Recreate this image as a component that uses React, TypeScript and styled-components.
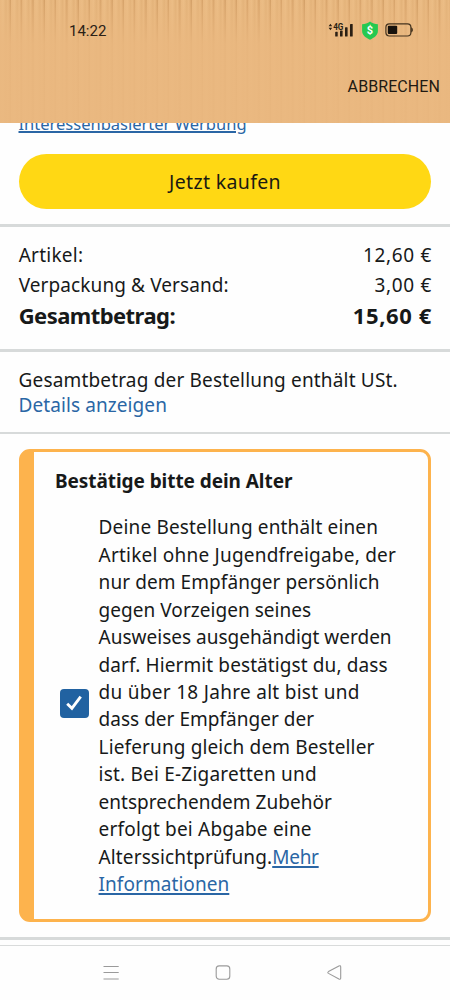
import React from "react";
import styled, { createGlobalStyle } from "styled-components";

const Global = createGlobalStyle`
  * { box-sizing: border-box; }
  body { margin: 0; background: #fefefe; }
`;

const Screen = styled.main`
  width: 450px;
  height: 1000px;
  overflow: hidden;
  display: flex;
  flex-direction: column;
  background: #fefefe;
  color: #171919;
  font-family: "Noto Sans", "Open Sans", sans-serif;
  font-size: 19px;
  white-space: nowrap;
`;

const Header = styled.header`
  flex: none;
  height: 122.7px;
  display: flex;
  flex-direction: column;
  font-family: Roboto, sans-serif;
  color: #2b2116;
  background:
    linear-gradient(to bottom, rgba(234, 184, 128, 0.3) 0, rgba(234, 184, 128, 0.5) 14px, rgba(234, 184, 128, 0.9) 44px, rgba(234, 184, 128, 0.94) 100%),
    repeating-linear-gradient(to right, #e8b880 0, #ecbf88 3px, #e0b077 6px, #eabb83 8px, #d5a168 10px, #cb985f 10.7px, #e8b880 11.3px);
`;

const StatusBar = styled.div`
  height: 61px;
  padding: 0 36px 0 69px;
  display: flex;
  align-items: center;
  justify-content: space-between;
  font-size: 15px;
`;

const StatusIcons = styled.div`
  display: flex;
  align-items: center;
  gap: 6px;
  margin-top: -1px;
`;

const Cancel = styled.button`
  align-self: flex-end;
  margin: 14.5px 10px 0 0;
  padding: 0;
  border: 0;
  background: none;
  color: #211a12;
  font: 16px/22px Roboto, sans-serif;
  letter-spacing: 0.08px;
`;

const ClippedLink = styled.div`
  flex: none;
  height: 31.1px;
  padding-left: 18.5px;
  display: flex;
  align-items: flex-start;
  overflow: hidden;
  font-size: 16.5px;
  line-height: 20px;
`;

const Link = styled.a<{ $track?: number; $underline?: boolean }>`
  color: #2a66a5;
  letter-spacing: ${(p) => p.$track ?? 0}px;
  text-decoration: ${(p) => (p.$underline ? "underline" : "none")};
  text-decoration-thickness: 1.5px;
  text-underline-offset: 2px;
`;

const PulledLink = styled(Link)`
  margin-top: -8.6px;
  text-underline-offset: 1px;
`;

const BuyButton = styled.button`
  flex: none;
  height: 55px;
  margin: 0 18.7px 15.6px;
  padding: 1px 0 0;
  border: 0;
  border-radius: 28px;
  background: #ffd814;
  color: #1b1a12;
  font: 19.5px "Noto Sans", sans-serif;
  letter-spacing: 0.35px;
`;

const Divider = styled.hr<{ $size?: number }>`
  flex: none;
  width: 100%;
  height: ${(p) => p.$size ?? 2.4}px;
  margin: 0;
  border: 0;
  background: #d7dada;
`;

const Totals = styled.section`
  flex: none;
  padding: 13.2px 18.7px 18px 18.7px;
  height: 122.5px;
`;

const TotalRow = styled.div<{ $strong?: boolean }>`
  display: flex;
  justify-content: space-between;
  line-height: ${(p) => (p.$strong ? 29.6 : 30.3)}px;
  font-size: ${(p) => (p.$strong ? 22 : 19)}px;
  font-weight: ${(p) => (p.$strong ? 700 : 400)};
`;

const Text = styled.span<{ $track: number }>`
  letter-spacing: ${(p) => p.$track}px;
`;

const Amount = styled(Text)`
  margin-right: ${(p) => -p.$track}px;
`;

const TaxNote = styled.section`
  flex: none;
  height: 79.9px;
  padding: 16.3px 18.5px 0;
  display: flex;
  flex-direction: column;
  line-height: 24.8px;
`;

const AgeCard = styled.section`
  flex: none;
  height: 473px;
  margin: 15px 18.7px 15.6px;
  padding: 15.5px 0 0 21.2px;
  border: 3px solid #fdb34d;
  border-left-width: 15px;
  border-radius: 11px;
`;

const CardTitle = styled.h2`
  margin: 0 0 19.1px;
  font-size: 19px;
  line-height: 28px;
  font-weight: 700;
  letter-spacing: -0.06px;
`;

const Consent = styled.div`
  display: flex;
  align-items: center;
  padding-left: 5px;
`;

const Checkbox = styled.span`
  width: 28.7px;
  height: 28.7px;
  margin: -6.5px 10px 0 0;
  display: flex;
  align-items: center;
  justify-content: center;
  border-radius: 4px;
  background: #2162a1;
`;

const Paragraph = styled.div`
  line-height: 27.45px;
`;

const Line = styled.div<{ $track: number }>`
  letter-spacing: ${(p) => p.$track}px;
`;

const NavBar = styled.nav`
  flex: 1;
  margin-top: 5.8px;
  padding: 18.6px 0 0 103px;
  display: flex;
  align-items: flex-start;
  border-top: 1px solid #d9dbdb;
`;

const NavIcon = styled.svg<{ $gap?: number }>`
  flex: none;
  width: 16px;
  height: 15px;
  margin-right: ${(p) => p.$gap ?? 0}px;
  fill: none;
  stroke: #9a9a9a;
  stroke-width: 1.1;
`;

const lines: [string, number][] = [
  ["Deine Bestellung enthält einen", 0.16],
  ["Artikel ohne Jugendfreigabe, der", 0.22],
  ["nur dem Empfänger persönlich", 0.08],
  ["gegen Vorzeigen seines", 0.04],
  ["Ausweises ausgehändigt werden", 0.01],
  ["darf. Hiermit bestätigst du, dass", 0.1],
  ["du über 18 Jahre alt bist und", 0.29],
  ["dass der Empfänger der", 0.02],
  ["Lieferung gleich dem Besteller", 0.13],
  ["ist. Bei E-Zigaretten und", 0.21],
  ["entsprechendem Zubehör", 0.02],
  ["erfolgt bei Abgabe eine", 0.19],
];

function SignalIcon() {
  return (
    <svg width="28" height="18" viewBox="0 0 28 18">
      <g fill="#2a1f14">
        <path d="M1.6 5.2 3.4 2.8 5.200 5.200ZM1.600 6.800h3.600L3.400 9.200Z" />
        <rect x="8.200" y="10.800" width="2.500" height="4.800" rx=".6" />
        <rect x="13" y="9.600" width="2.600" height="6" rx=".6" />
        <rect x="18" y="6.200" width="2.600" height="9.400" rx=".6" />
        <rect x="23" y="3" width="2.700" height="12.600" rx=".6" />
        <text x="6.200" y="8.800" fontSize="8.700" fontWeight="700" fontFamily="Roboto, sans-serif" textLength="10.200" lengthAdjust="spacingAndGlyphs">4G</text>
      </g>
    </svg>
  );
}

function ShieldIcon() {
  return (
    <svg width="18" height="19" viewBox="0 0 18 19">
      <path d="M9 .6C11.500 2.500 14 3 16.900 3.200V10c0 4-3.600 6.800-7.900 8.700C4.700 16.800 1.100 14 1.100 10V3.200C4 3 6.500 2.500 9 .6Z" fill="#25c950" />
      <text x="9" y="13.400" textAnchor="middle" fontSize="11" fontWeight="700" fontFamily="Roboto, sans-serif" fill="#fff">$</text>
    </svg>
  );
}

function BatteryIcon() {
  return (
    <svg width="29" height="14" viewBox="0 0 29 14">
      <rect x=".9" y=".8" width="25" height="12.200" rx="3.500" fill="none" stroke="#44331f" strokeWidth="1.200" />
      <rect x="2.800" y="2.800" width="9.400" height="8.200" rx="1" fill="#17120d" />
      <path d="M26.500 4.800c1.400.2 1.400 4 0 4.200Z" fill="#44331f" stroke="#44331f" strokeWidth=".7" />
    </svg>
  );
}

export default function App() {
  return (
    <Screen>
      <Global />
      <Header>
        <StatusBar>
          <span>14:22</span>
          <StatusIcons>
            <SignalIcon />
            <ShieldIcon />
            <BatteryIcon />
          </StatusIcons>
        </StatusBar>
        <Cancel>ABBRECHEN</Cancel>
      </Header>
      <ClippedLink>
        <PulledLink $underline>Interessenbasierter Werbung</PulledLink>
      </ClippedLink>
      <BuyButton>Jetzt kaufen</BuyButton>
      <Divider />
      <Totals>
        <TotalRow>
          <Text $track={0.25}>Artikel:</Text>
          <Amount $track={0.65}>12,60 €</Amount>
        </TotalRow>
        <TotalRow>
          <Text $track={0.1}>Verpackung &amp; Versand:</Text>
          <Amount $track={0.65}>3,00 €</Amount>
        </TotalRow>
        <TotalRow $strong>
          <Text $track={-0.55}>Gesamtbetrag:</Text>
          <Amount $track={0.6}>15,60 €</Amount>
        </TotalRow>
      </Totals>
      <Divider />
      <TaxNote>
        <Text $track={0.17}>Gesamtbetrag der Bestellung enthält USt.</Text>
        <Link $track={0.09}>Details anzeigen</Link>
      </TaxNote>
      <Divider $size={2.1} />
      <AgeCard>
        <CardTitle>Bestätige bitte dein Alter</CardTitle>
        <Consent>
          <Checkbox role="checkbox" aria-checked="true">
            <svg width="18" height="18" viewBox="0 0 18 18" fill="none" stroke="#fff" strokeWidth="2.9">
              <path d="M2.200 9.800 6.900 14.300 15.700 2.600" />
            </svg>
          </Checkbox>
          <Paragraph>
            {lines.map(([text, track]) => (
              <Line key={text} $track={track}>{text}</Line>
            ))}
            <Line $track={0.12}>
              Alterssichtprüfung.<Link $underline $track={-0.27}>Mehr</Link>
            </Line>
            <Line $track={0}>
              <Link $underline $track={0.06}>Informationen</Link>
            </Line>
          </Paragraph>
        </Consent>
      </AgeCard>
      <Divider />
      <NavBar>
        <NavIcon viewBox="0 0 16 15" $gap={96}>
          <path d="M.5 1.500h15.200M.5 7.500h15.200M.5 14h15.200" />
        </NavIcon>
        <NavIcon viewBox="0 0 16 15" $gap={95}>
          <rect x="1.200" y=".9" width="13.600" height="13.300" rx="3" />
        </NavIcon>
        <NavIcon viewBox="0 0 16 15">
          <path d="M2.500 6.600 12.900.9Q14.700.2 14.700 2V13Q14.700 14.700 12.900 14.100L2.500 8.400Q1.100 7.500 2.500 6.600Z" />
        </NavIcon>
      </NavBar>
    </Screen>
  );
}
